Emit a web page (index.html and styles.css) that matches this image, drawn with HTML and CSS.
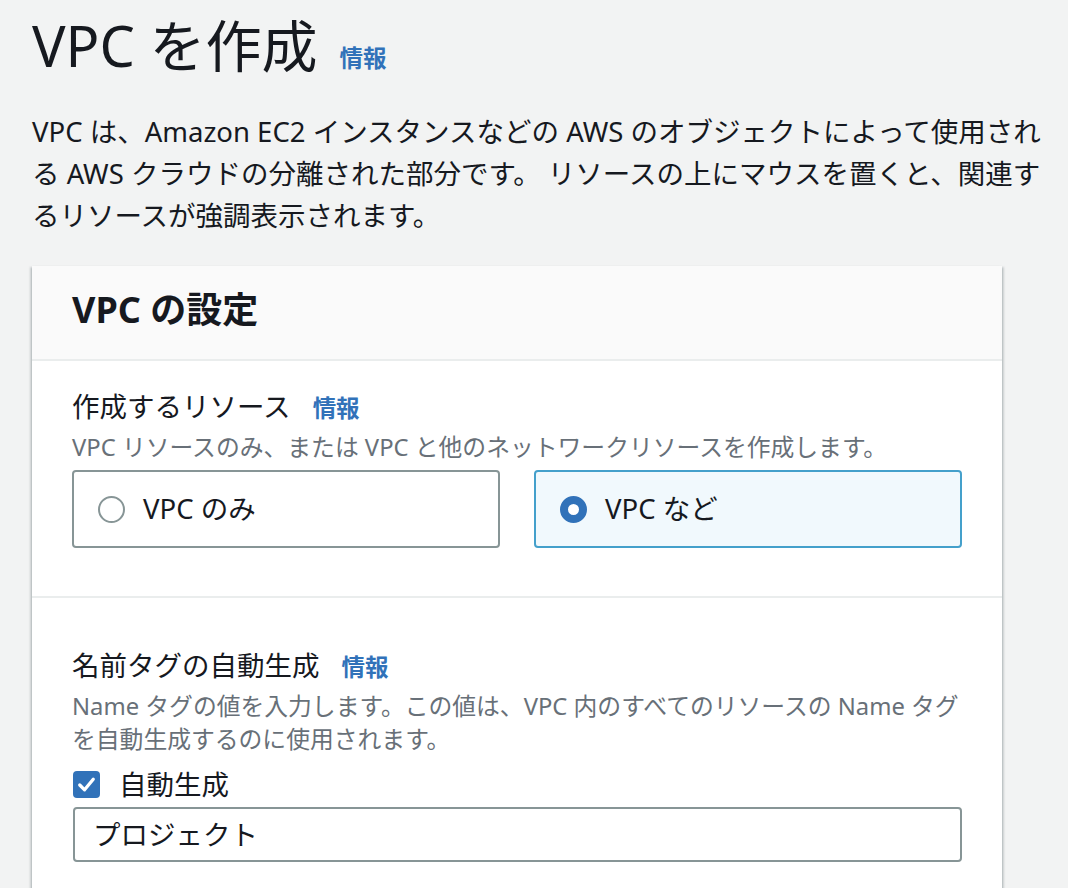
FILE: index.html
```html
<!DOCTYPE html>
<html lang="ja">
<head>
<meta charset="utf-8">
<title>VPC を作成</title>
<link rel="stylesheet" href="styles.css">
</head>
<body>
<main class="page">
  <header class="page-header">
    <h1 class="page-title">VPC を作成<a class="info info-title" href="#">情報</a></h1>
    <p class="page-desc">VPC は、Amazon EC2 インスタンスなどの AWS のオブジェクトによって使用される AWS クラウドの分離された部分です。 リソースの上にマウスを置くと、関連するリソースが強調表示されます。</p>
  </header>

  <section class="card">
    <div class="card-header">
      <h2 class="card-title">VPC の設定</h2>
    </div>
    <div class="card-section first">
      <div class="field-label">作成するリソース<a class="info" href="#">情報</a></div>
      <div class="field-desc">VPC リソースのみ、または VPC と他のネットワークリソースを作成します。</div>
      <div class="tiles">
        <label class="tile">
          <span class="radio"></span>
          <span class="tile-text">VPC のみ</span>
        </label>
        <label class="tile selected">
          <span class="radio checked"></span>
          <span class="tile-text">VPC など</span>
        </label>
      </div>
    </div>
    <div class="card-section second">
      <div class="field-label">名前タグの自動生成<a class="info" href="#">情報</a></div>
      <div class="field-desc">Name タグの値を入力します。この値は、VPC 内のすべてのリソースの Name タグを自動生成するのに使用されます。</div>
      <label class="check-row">
        <span class="checkbox">
          <svg viewBox="0 0 28 28" width="27" height="27"><polyline points="7,14.5 12,19.5 21,8.5" fill="none" stroke="#fff" stroke-width="3.4" stroke-linecap="round" stroke-linejoin="round"/></svg>
        </span>
        <span class="check-text">自動生成</span>
      </label>
      <div class="input">プロジェクト</div>
    </div>
  </section>
</main>
</body>
</html>
```

FILE: styles.css
```css
* { box-sizing: border-box; }
html, body { margin: 0; padding: 0; }
body {
  background: #f2f3f3;
  color: #16191f;
  font-family: "Noto Sans", "Noto Sans CJK JP", sans-serif;
}
.page {
  padding: 11px 12px 0 32px;
}
.page-title {
  margin: 0;
  font-size: 56px;
  line-height: 68px;
  font-weight: 400;
  color: #16191f;
}
.info {
  color: #3172b9;
  font-weight: 700;
  text-decoration: none;
  font-size: 23.5px;
  margin-left: 22px;
}
.info-title {
  margin-left: 22px;
}
.page-desc {
  margin: 19px 0 0;
  font-size: 27.5px;
  line-height: 41.8px;
}
.card {
  margin-top: 30px;
  width: 970px;
  background: #fff;
  box-shadow: 0 2px 2px 0 rgba(0, 28, 36, 0.25), 2px 1px 2px 0 rgba(0, 28, 36, 0.15), -2px 1px 2px 0 rgba(0, 28, 36, 0.15);
  padding-bottom: 40px;
}
.card-header {
  background: #fafafa;
  border-bottom: 2px solid #eaeded;
  padding: 23px 40px 28px;
}
.card-title {
  margin: 0;
  font-size: 36px;
  line-height: 42px;
  font-weight: 700;
}
.card-section {
  padding: 0 40px;
}
.card-section.first {
  padding-top: 25px;
  padding-bottom: 48px;
}
.card-section.second {
  border-top: 2px solid #eaeded;
  padding-top: 47px;
}
.field-label {
  font-size: 27.5px;
  line-height: 41.8px;
}
.field-desc {
  margin-top: 1px;
  font-size: 23.8px;
  line-height: 33px;
  color: #687078;
}
.tiles {
  margin-top: 6px;
  display: grid;
  grid-template-columns: 1fr 1fr;
  column-gap: 34px;
}
.tile {
  height: 78px;
  border: 2px solid #879596;
  border-radius: 4px;
  display: flex;
  align-items: center;
  padding-left: 24px;
  gap: 18px;
  background: #fff;
}
.tile.selected {
  border-color: #44a0cb;
  background: #f1f9fd;
}
.radio {
  width: 27px;
  height: 27px;
  border-radius: 50%;
  border: 2px solid #879596;
  background: #fff;
  flex: none;
}
.radio.checked {
  border: 8px solid #3172b9;
}
.tile-text {
  font-size: 27.5px;
  line-height: 41.8px;
}
.check-row {
  margin-top: 8px;
  display: flex;
  align-items: center;
  gap: 19px;
  padding-left: 1px;
}
.checkbox {
  width: 27px;
  height: 27px;
  background: #3172b9;
  border-radius: 4px;
  display: flex;
  flex: none;
}
.check-text {
  font-size: 27.5px;
  line-height: 41.8px;
}
.input {
  margin-top: 1px;
  height: 55px;
  border: 2px solid #879596;
  border-radius: 4px;
  padding-left: 18px;
  font-size: 27.5px;
  line-height: 51px;
  margin-left: 1px;
}
```
